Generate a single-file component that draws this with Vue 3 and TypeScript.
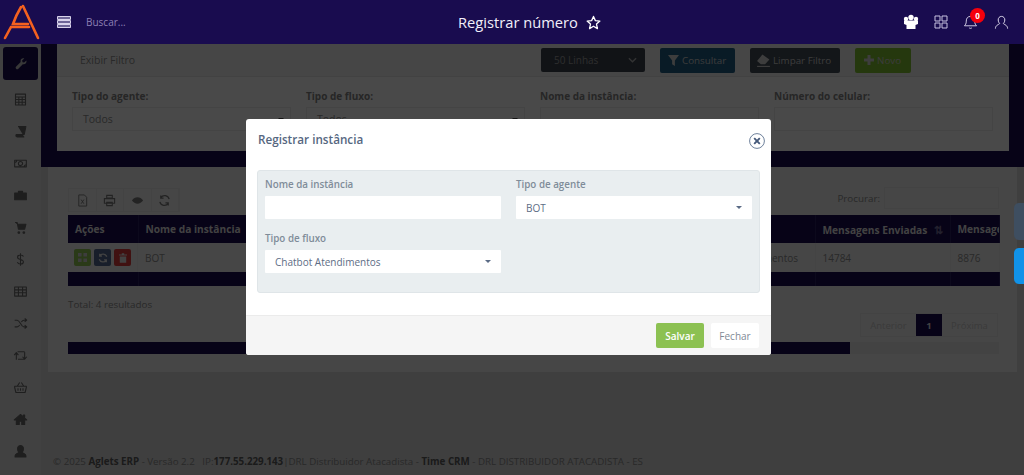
<script setup lang="ts">
interface SideIcon { d: string; fill?: boolean }
const sideIcons: SideIcon[] = [
  { d: 'M3 2.500h12v13H3zM3 6h12M7 6v9.500M11 6v9.500M3 9h12M3 12.200h12' },
  { d: 'M6 3h9.500l-2 9.500H4C3 14 3.500 15.500 5 15.500h8.500', fill: true },
  { d: 'M2 5h14v8H2zM9 6.500a2.500 2.500 0 1 1 0 5 2.500 2.500 0 0 1 0-5zM2 7.500a2.500 2.500 0 0 0 2.500-2.500M16 10.500a2.500 2.500 0 0 0-2.500 2.500' },
  { d: 'M2 6h14v8H2zM6.500 6V4h5v2', fill: true },
  { d: 'M2.500 3H5l1.500 8h7.500l1.500-6H5M7 14a1 1 0 1 0 .01 0M13 14a1 1 0 1 0 .01 0', fill: true },
  { d: 'M12.500 5.500C12 4 10.500 3.500 9 3.500c-2 0-3.500 1-3.500 2.700 0 3.600 7 1.900 7 5.500 0 1.800-1.500 2.800-3.500 2.800-1.800 0-3.200-.7-3.700-2.300M9 1.500v15' },
  { d: 'M2 3.500h14v11H2zM2 7h14M2 10.500h14M6.500 3.500v11M11.500 3.500v11' },
  { d: 'M2 5h3c3.500 0 4.500 8 8 8h3M2 13h3c1.300 0 2.200-1 3-2.200M16 5h-3c-1.300 0-2.200 1-3 2.200M14 3l2.500 2L14 7M14 11l2.500 2-2.500 2' },
  { d: 'M4 14V6M1.500 8.500 4 5.500l2.500 3M6 13.500h8V5M5.500 4.500H14M11.500 10.500l2.500 3 2.500-3' },
  { d: 'M2 7.500h14v1.500l-1.500 6h-11L2 9zM5 7.500 8 3M13 7.500 10 3M6 10v3M9 10v3M12 10v3' },
  { d: 'M9 3 1.500 9.500H4V15h3.500v-4h3v4H14V9.500h2.500zM12.500 3.500H14V6l-1.500-1.300z', fill: true },
  { d: 'M9 2a3.500 3.500 0 0 1 3.500 4c0 2-1 3.500-1.500 4 0 1 4.500 1.500 4.500 4v1.500h-13V14c0-2.500 4.500-3 4.500-4-.5-.5-1.500-2-1.500-4A3.500 3.500 0 0 1 9 2z', fill: true },
]
const filters = ['Tipo do agente:', 'Tipo de fluxo:', 'Nome da instância:', 'Número do celular:']
</script>

<template>
  <div class="page">
    <header class="topbar">
      <svg class="logo" viewBox="0 0 42 42" width="42" height="42" aria-hidden="true">
        <path d="M22 5 37 37M20 6C17 11 14 17 12 23H27M4 37 10 26H28" fill="none" stroke="#f4611f" stroke-width="2.600" stroke-linecap="round" />
      </svg>
      <svg class="menu" viewBox="0 0 14 12" width="14" height="12" aria-hidden="true">
        <path d="M.5.5h13v3H.5zM.5 4.500h13v3H.5zM.5 8.500h13v3H.5z" fill="#6d6596" stroke="#d8d3ea" />
      </svg>
      <span class="search">Buscar...</span>
      <div class="title">
        <span>Registrar número</span>
        <svg viewBox="0 0 16 16" width="15" height="15" aria-hidden="true">
          <path d="M8 1.500 10 6l4.800.5-3.600 3.200 1 4.800L8 12l-4.200 2.500 1-4.800L1.200 6.500 6 6z" fill="none" stroke="#fff" stroke-width="1.400" stroke-linejoin="round" />
        </svg>
      </div>
      <div class="top-icons">
        <svg viewBox="0 0 16 16" width="16" height="16" aria-hidden="true">
          <circle cx="3" cy="5" r="2.200" fill="#fff" /><circle cx="13" cy="5" r="2.200" fill="#fff" /><circle cx="8" cy="3.500" r="2.700" fill="#fff" />
          <path d="M1 6.500h14V10l-2.500 1V15h-9v-4L1 10z" fill="#fff" />
        </svg>
        <svg viewBox="0 0 14 14" width="14" height="14" aria-hidden="true">
          <path d="M1 1h5v5H1zM8 1h5v5H8zM1 8h5v5H1zM8 8h5v5H8z" fill="none" stroke="#c9c3e2" />
        </svg>
        <div class="bell">
          <svg viewBox="0 0 16 16" width="15" height="15" aria-hidden="true">
            <path d="M8 1.500c-3 0-4.500 2-4.500 5 0 3-1 4-2 5h13c-1-1-2-2-2-5 0-3-1.500-5-4.500-5zM6.500 13.500c.5 1 2.500 1 3 0" fill="none" stroke="#d8d3ea" />
          </svg>
          <span class="badge">0</span>
        </div>
        <svg viewBox="0 0 16 16" width="15" height="15" aria-hidden="true">
          <path d="M8 1.500a3.500 3.500 0 0 1 3.500 3.800c0 2-1 3.200-1.500 3.700 0 1 4.500 1.500 4.500 5.500M8 1.500a3.500 3.500 0 0 0-3.500 3.800c0 2 1 3.200 1.500 3.700 0 1-4.500 1.500-4.500 5.500" fill="none" stroke="#e5e2f2" />
        </svg>
      </div>
    </header>

    <div class="body">
      <aside class="sidebar">
        <div class="side-active">
          <svg viewBox="0 0 18 18" width="14" height="14" aria-hidden="true">
            <path d="M16 4.500 13 7.200l-2-.6-.6-2L13.200 2C11 1 8.500 2.500 8.400 5c0 .6.100 1 .2 1.500L2.500 12.500a2 2 0 0 0 2.800 2.800l6-6c2.800.8 5.400-1.800 4.700-4.800z" fill="#bbb" />
          </svg>
        </div>
        <div v-for="(icon, i) in sideIcons" :key="i" class="side-item">
          <svg viewBox="0 0 18 18" width="15" height="15" aria-hidden="true">
            <path :d="icon.d" :fill="icon.fill ? '#666' : 'none'" stroke="#666" stroke-width="1.300" stroke-linejoin="round" />
          </svg>
        </div>
      </aside>

      <main class="main">
        <div class="band">
          <section class="filter">
            <div class="filter-head">
              <span class="filter-toggle">Exibir Filtro</span>
              <div class="filter-tools">
                <div class="lines">
                  <span>50 Linhas</span>
                  <svg viewBox="0 0 10 6" width="9" height="6" aria-hidden="true"><path d="M1 1l4 4 4-4" fill="none" stroke="#aaa" stroke-width="1.500" /></svg>
                </div>
                <button class="btn btn-blue">
                  <svg viewBox="0 0 12 12" width="11" height="11" aria-hidden="true"><path d="M0 0h12L7.500 6v6l-3-2V6z" fill="#ccc" /></svg>
                  Consultar
                </button>
                <button class="btn btn-dark">
                  <svg viewBox="0 0 14 12" width="15" height="13" aria-hidden="true"><path d="M6 .5l6.500 4.500-4 4.500H4.500L1 6.500z" fill="#ccc" /><path d="M1 11.500h12" stroke="#ccc" stroke-width="1" /></svg>
                  Limpar Filtro
                </button>
                <button class="btn btn-green">
                  <svg viewBox="0 0 10 10" width="10" height="10" aria-hidden="true"><path d="M3.500 0h3v3.500H10v3H6.500V10h-3V6.500H0v-3h3.500z" fill="#ccc" /></svg>
                  Novo
                </button>
              </div>
            </div>
            <div class="filter-body">
              <div v-for="(label, i) in filters" :key="label" class="filter-field">
                <label>{{ label }}</label>
                <div class="filter-input">
                  <span v-if="i < 2">Todos</span>
                  <i v-if="i < 2" class="caret caret-dark"></i>
                </div>
              </div>
            </div>
          </section>
        </div>

        <section class="list">
          <div class="table-tools">
            <div class="tool-group">
              <span class="tool">
                <svg viewBox="0 0 14 14" width="13" height="13" aria-hidden="true"><path d="M3 1h6l2.500 2.500V13H3zM5.500 6l3 4.500M8.500 6l-3 4.500" fill="none" stroke="#777" /></svg>
              </span>
              <span class="tool">
                <svg viewBox="0 0 14 14" width="13" height="13" aria-hidden="true"><path d="M4 1.500h6v3H4zM1.500 5h11v5h-11zM4 9h6v3.500H4z" fill="none" stroke="#777" stroke-width="1.200" /></svg>
              </span>
              <span class="tool">
                <svg viewBox="0 0 14 14" width="13" height="13" aria-hidden="true"><path d="M1 7c3-4.500 9-4.500 12 0-3 4.500-9 4.500-12 0z" fill="#777" /></svg>
              </span>
              <span class="tool">
                <svg viewBox="0 0 14 14" width="13" height="13" aria-hidden="true"><path d="M12 5.500A5 5 0 0 0 3 4M2 8.500A5 5 0 0 0 11 10M3 1.500V4.500H6M11 12.500V9.500H8" fill="none" stroke="#777" stroke-width="1.400" /></svg>
              </span>
            </div>
            <div class="table-search">
              <span>Procurar:</span>
              <div class="search-box"></div>
            </div>
          </div>

          <table class="grid">
            <colgroup>
              <col class="c-a" /><col class="c-b" /><col class="c-c" /><col class="c-d" /><col class="c-e" /><col class="c-f" />
            </colgroup>
            <thead>
              <tr>
                <th>Ações</th>
                <th>Nome da instância</th>
                <th>Tipo de agente</th>
                <th class="th-sort">Fluxo <span class="sort">⇅</span></th>
                <th class="th-sort">Mensagens Enviadas <span class="sort">⇅</span></th>
                <th>Mensagens</th>
              </tr>
            </thead>
            <tbody>
              <tr>
                <td class="actions">
                  <span class="act act-green">
                    <svg viewBox="0 0 10 10" width="9" height="9" aria-hidden="true"><path d="M0 0h4v4H0zM6 0h4v4H6zM0 6h4v4H0zM6 6h4v4H6z" fill="#ccc" /></svg>
                  </span>
                  <span class="act act-blue">
                    <svg viewBox="0 0 12 12" width="10" height="10" aria-hidden="true"><path d="M10.500 4.500A4.700 4.700 0 0 0 2 3.500M1.500 7.500A4.700 4.700 0 0 0 10 8.500M2 1v2.700h2.700M10 11V8.300H7.300" fill="none" stroke="#ddd" stroke-width="1.500" /></svg>
                  </span>
                  <span class="act act-red">
                    <svg viewBox="0 0 10 12" width="8" height="10" aria-hidden="true"><path d="M3.500 0h3v1.500H10V3H0V1.500h3.500zM1 4h8v8H1z" fill="#ddd" /></svg>
                  </span>
                </td>
                <td>BOT</td>
                <td></td>
                <td>Chatbot Atendimentos</td>
                <td>14784</td>
                <td>8876</td>
              </tr>
            </tbody>
            <tfoot>
              <tr><td></td><td></td><td></td><td></td><td></td><td></td></tr>
            </tfoot>
          </table>

          <div class="total">Total: 4 resultados</div>
          <div class="pager">
            <span class="page-link">Anterior</span>
            <span class="page-current">1</span>
            <span class="page-link">Próxima</span>
          </div>
          <div class="hscroll"><div class="hthumb"></div></div>
        </section>

        <footer class="footer">
          © 2025 <b>Aglets ERP</b> - Versão 2.2 &nbsp;&nbsp;IP:<b>177.55.229.143</b>|DRL Distribuidor Atacadista - <b>Time CRM</b> - DRL DISTRIBUIDOR ATACADISTA - ES
        </footer>
      </main>
    </div>

    <div class="backdrop">
      <div class="modal">
        <div class="modal-head">
          <h2>Registrar instância</h2>
          <svg viewBox="0 0 16 16" width="16" height="16" aria-hidden="true">
            <circle cx="8" cy="8" r="7.400" fill="none" stroke="#5d7390" stroke-width=".9" />
            <path d="M5.200 5.200l5.600 5.600M10.800 5.200l-5.600 5.600" stroke="#45597a" stroke-width="1.900" />
          </svg>
        </div>
        <div class="modal-body">
          <div class="form-box">
            <div class="form-field">
              <label>Nome da instância</label>
              <div class="form-input"></div>
            </div>
            <div class="form-field">
              <label>Tipo de agente</label>
              <div class="form-input"><span>BOT</span><i class="caret"></i></div>
            </div>
            <div class="form-field">
              <label>Tipo de fluxo</label>
              <div class="form-input"><span>Chatbot Atendimentos</span><i class="caret"></i></div>
            </div>
          </div>
        </div>
        <div class="modal-foot">
          <button class="save">Salvar</button>
          <button class="close">Fechar</button>
        </div>
      </div>
    </div>

    <div class="side-tab side-tab-grey"></div>
    <div class="side-tab side-tab-blue"></div>
  </div>
</template>

<style scoped>
.page {
  position: relative;
  width: 1024px;
  height: 475px;
  overflow: hidden;
  background: #d2d2d2;
  font-family: "Open Sans", "Liberation Sans", sans-serif;
  font-size: 11px;
  color: #8a8a8a;
}
.topbar {
  position: relative;
  z-index: 3;
  display: flex;
  align-items: center;
  height: 44px;
  background: #190c4f;
  color: #fff;
}
.logo { margin-left: 1px; flex: none; }
.menu { margin-left: 14px; flex: none; }
.search { margin-left: 15px; color: #8d80b4; font-size: 10px; }
.title {
  position: absolute;
  left: 458px;
  top: 0;
  height: 44px;
  display: flex;
  align-items: center;
  gap: 8px;
  font-size: 14.700px;
  color: #f1effa;
}
.top-icons {
  margin-left: auto;
  margin-right: 15px;
  display: flex;
  align-items: center;
  gap: 15px;
}
.bell { position: relative; display: flex; margin-right: 1px; }
.badge {
  position: absolute;
  top: -7px;
  left: 7px;
  width: 15px;
  height: 15px;
  border-radius: 50%;
  background: #f5000c;
  color: #fff;
  font-size: 8px;
  font-weight: 700;
  line-height: 15px;
  text-align: center;
}
.body { display: flex; height: 431px; }
.sidebar {
  width: 41px;
  flex: none;
  padding-top: 3px;
  box-sizing: border-box;
  background: #d9d9d9;
  display: flex;
  flex-direction: column;
  align-items: center;
}
.side-active {
  width: 35px;
  height: 33px;
  margin-bottom: 3.500px;
  border-radius: 3px;
  background: #190c4f;
  display: flex;
  align-items: center;
  justify-content: center;
}
.side-item {
  height: 32px;
  flex: none;
  display: flex;
  align-items: center;
  justify-content: center;
}
.main { flex: 1; min-width: 0; display: flex; flex-direction: column; }
.band {
  height: 123px;
  flex: none;
  background: #190c4f;
  padding: 0 15px 16px 16px;
  box-sizing: border-box;
}
.filter {
  height: 107px;
  background: #f6f6f6;
  display: flex;
  flex-direction: column;
}
.filter-head {
  height: 33px;
  flex: none;
  display: flex;
  align-items: center;
  background: #ececec;
  border-bottom: 1px solid #dedede;
  box-sizing: border-box;
}
.filter-toggle { margin-left: 23px; margin-top: -1px; font-size: 10.500px; color: #8a8a8a; }
.filter-tools { margin-left: auto; margin-right: 98px; display: flex; gap: 15px; }
.lines {
  width: 104px;
  height: 24px;
  box-sizing: border-box;
  padding: 0 8px 0 13px;
  background: #39414c;
  border-radius: 2px;
  color: #999;
  font-size: 10px;
  display: flex;
  align-items: center;
  justify-content: space-between;
}
.btn {
  height: 25px;
  padding: 0 0 0 8px;
  border: 0;
  border-radius: 2px;
  color: #c8c8c8;
  font-family: inherit;
  font-size: 9.800px;
  display: flex;
  align-items: center;
  justify-content: flex-start;
  gap: 3px;
  white-space: nowrap;
}
.btn-blue { width: 75px; background: #1f5c80; }
.btn-dark { width: 90px; background: #404a54; padding-left: 6px; gap: 2px; }
.btn-green { width: 56px; background: #7dbb30; padding-left: 9px; }
.filter-body {
  display: flex;
  gap: 15px;
  padding: 12px 16px 0 15px;
}
.filter-field { flex: 1; min-width: 0; }
.filter-field label { display: block; font-weight: 700; font-size: 10px; color: #808080; line-height: 14px; }
.filter-input {
  margin-top: 4px;
  height: 24px;
  box-sizing: border-box;
  padding: 0 6px 0 10px;
  border: 1px solid #e4e4e4;
  display: flex;
  align-items: center;
  justify-content: space-between;
  color: #8a8a8a;
  font-size: 10.500px;
}
.caret {
  width: 0;
  height: 0;
  border-left: 3.500px solid transparent;
  border-right: 3.500px solid transparent;
  border-top: 3.500px solid #5a6b85;
}
.caret-dark { border-top-color: #444; }
.list {
  height: 205px;
  flex: none;
  margin: 0 7px 0 7px;
  padding: 21px 18px 0 20px;
  box-sizing: border-box;
  background: #ebebeb;
}
.table-tools { display: flex; justify-content: space-between; align-items: flex-start; height: 27px; }
.tool-group { display: flex; border: 1px solid #e0e0e0; height: 24px; box-sizing: border-box; }
.tool {
  width: 27.500px;
  display: flex;
  align-items: center;
  justify-content: center;
  border-right: 1px solid #e0e0e0;
  box-sizing: border-box;
}
.table-search { display: flex; align-items: center; gap: 4px; margin-top: -1px; color: #8a8a8a; font-size: 9.800px; }
.search-box { width: 115px; height: 22px; border: 1px solid #e0e0e0; box-sizing: border-box; }
.grid {
  width: 931px;
  table-layout: fixed;
  border-collapse: collapse;
  font-size: 10px;
}
.c-a { width: 70px; }
.c-b { width: 220px; }
.c-c { width: 327px; }
.c-d { width: 130px; }
.c-e { width: 135px; }
.c-f { width: 49px; }
.grid th {
  height: 28px;
  padding: 0 7px;
  background: #190c4f;
  color: #ddd;
  text-align: left;
  font-size: 10.200px;
  white-space: nowrap;
  overflow: hidden;
  border-right: 1px solid #2a1e60;
}
.grid .th-sort { font-size: 10.200px; }
.sort { margin-left: 4px; color: #76709a; font-size: 11px; }
.grid td {
  height: 29px;
  padding: 0 7px;
  color: #8a8a8a;
  white-space: nowrap;
  overflow: hidden;
  border-right: 1px solid #e4e4e4;
}
.grid tfoot td { height: 14px; padding: 0; background: #190c4f; border-right: 1px solid #2a1e60; }
.actions { display: flex; align-items: center; gap: 3px; padding: 0 6px !important; }
.act {
  width: 17px;
  height: 17px;
  border-radius: 2px;
  display: flex;
  align-items: center;
  justify-content: center;
}
.act-green { background: #8cc152; }
.act-blue { background: #50668c; }
.act-red { background: #d83a3a; }
.total { margin-top: 12px; font-size: 9.800px; color: #8a8a8a; line-height: 14px; }
.pager {
  margin: 1px 1px 0 auto;
  width: 138px;
  height: 24px;
  box-sizing: border-box;
  border: 1px solid #e0e0e0;
  display: flex;
  align-items: stretch;
  font-size: 9.500px;
  color: #c4c4c4;
}
.page-link { flex: 1; display: flex; align-items: center; justify-content: center; }
.page-current {
  width: 26px;
  background: #190c4f;
  color: #ddd;
  font-weight: 700;
  display: flex;
  align-items: center;
  justify-content: center;
}
.hscroll { margin-top: 5px; width: 931px; height: 12px; background: #e0e0e0; }
.hthumb { width: 782px; height: 12px; background: #190c4f; }
.footer {
  margin: 83px 0 0 12px;
  font-size: 9.750px;
  line-height: 14px;
  color: #8a8a8a;
  white-space: nowrap;
}
.footer b { color: #5a5a5a; }
.backdrop {
  position: absolute;
  inset: 44px 0 0 0;
  z-index: 2;
  background: rgba(0, 0, 0, 0.7);
  padding: 75px 0 0 246px;
}
.modal {
  width: 525px;
  height: 236px;
  background: #fff;
  border-radius: 3px;
  display: flex;
  flex-direction: column;
  overflow: hidden;
}
.modal-head {
  height: 51px;
  flex: none;
  box-sizing: border-box;
  padding: 13px 6px 0 12px;
  display: flex;
  justify-content: space-between;
  align-items: flex-start;
}
.modal-head h2 { margin: 0; font-size: 11.700px; line-height: 14px; font-weight: 600; color: #56677f; }
.modal-head svg { margin-top: 1px; }
.modal-body { flex: 1; padding: 0 11px 0 11px; }
.form-box {
  height: 123px;
  box-sizing: border-box;
  padding: 6px 7px 0 7px;
  background: #e9eef0;
  border: 1px solid #dfe5e8;
  border-radius: 3px;
  display: grid;
  grid-template-columns: 236px 236px;
  column-gap: 15px;
  row-gap: 12px;
  align-content: start;
}
.form-field label {
  display: block;
  font-size: 9.800px;
  line-height: 15px;
  font-weight: 600;
  color: #7f8c99;
}
.form-input {
  margin-top: 4px;
  height: 23px;
  box-sizing: border-box;
  background: #fff;
  border-radius: 1px;
  padding: 0 10px 0 10px;
  display: flex;
  align-items: center;
  justify-content: space-between;
  font-size: 10px;
  color: #5d6d85;
}
.modal-foot {
  height: 40px;
  flex: none;
  box-sizing: border-box;
  padding: 7px 12px 0 0;
  background: #f5f5f5;
  border-top: 1px solid #ebebeb;
  display: flex;
  justify-content: flex-end;
  gap: 7px;
  align-items: flex-start;
}
.save, .close {
  height: 25px;
  width: 48px;
  border: 0;
  border-radius: 2px;
  font-family: inherit;
  font-size: 10px;
  padding: 0;
}
.save { background: #8cc152; color: #fff; font-weight: 600; }
.close { background: #fff; color: #7f8a96; }
.side-tab {
  position: absolute;
  z-index: 3;
  left: 1014px;
  width: 10px;
  border-radius: 5px 0 0 5px;
}
.side-tab-grey { top: 203px; height: 37px; background: #3e4e60; }
.side-tab-blue { top: 248px; height: 36px; background: #1192e8; }
</style>
